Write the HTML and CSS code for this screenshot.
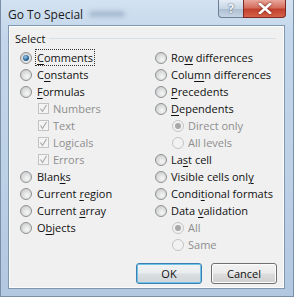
FILE: index.html
```html
<!DOCTYPE html>
<html>
<head>
  <title>Go To Special</title>
  <link rel="stylesheet" href="styles.css">
</head>
<body>

  <div class="window">
    <div class="titlebar">
      <span class="title">Go To Special</span>
      <span class="smudge"></span>
      <div class="caption-buttons">
        <span class="cap help">?</span>
        <span class="cap close">
          <svg width="14" height="11" viewBox="0 0 14 11">
            <path d="M2 1 L12 10 M12 1 L2 10" stroke="#fff" stroke-width="2.6" stroke-linecap="square"/>
          </svg>
        </span>
      </div>
    </div>

    <div class="client">
      <div class="group-head">
        <span>Select</span>
        <span class="rule"></span>
      </div>

      <div class="columns">
        <div class="col">
          <div class="opt"><span class="radio on"></span><span class="focus"><u>C</u>omments</span></div>
          <div class="opt"><span class="radio"></span><span>C<u>o</u>nstants</span></div>
          <div class="opt"><span class="radio"></span><span><u>F</u>ormulas</span></div>
          <div class="opt sub off"><span class="check"><svg width="9" height="9" viewBox="0 0 9 9"><path d="M1.5 4.5 L3.5 7.5 L7.5 1" fill="none" stroke="#a9a9a9" stroke-width="1.2"/></svg></span><span>Numbers</span></div>
          <div class="opt sub off"><span class="check"><svg width="9" height="9" viewBox="0 0 9 9"><path d="M1.5 4.5 L3.5 7.5 L7.5 1" fill="none" stroke="#a9a9a9" stroke-width="1.2"/></svg></span><span>Text</span></div>
          <div class="opt sub off"><span class="check"><svg width="9" height="9" viewBox="0 0 9 9"><path d="M1.5 4.5 L3.5 7.5 L7.5 1" fill="none" stroke="#a9a9a9" stroke-width="1.2"/></svg></span><span>Logicals</span></div>
          <div class="opt sub off"><span class="check"><svg width="9" height="9" viewBox="0 0 9 9"><path d="M1.5 4.5 L3.5 7.5 L7.5 1" fill="none" stroke="#a9a9a9" stroke-width="1.2"/></svg></span><span>Errors</span></div>
          <div class="opt"><span class="radio"></span><span>Blan<u>k</u>s</span></div>
          <div class="opt"><span class="radio"></span><span>Current <u>r</u>egion</span></div>
          <div class="opt"><span class="radio"></span><span>Current <u>a</u>rray</span></div>
          <div class="opt"><span class="radio"></span><span>O<u>b</u>jects</span></div>
        </div>

        <div class="col">
          <div class="opt"><span class="radio"></span><span>Ro<u>w</u> differences</span></div>
          <div class="opt"><span class="radio"></span><span>Colu<u>m</u>n differences</span></div>
          <div class="opt"><span class="radio"></span><span><u>P</u>recedents</span></div>
          <div class="opt"><span class="radio"></span><span><u>D</u>ependents</span></div>
          <div class="opt sub-r off"><span class="radio on"></span><span>Direct only</span></div>
          <div class="opt sub-r off"><span class="radio"></span><span>All levels</span></div>
          <div class="opt"><span class="radio"></span><span>La<u>s</u>t cell</span></div>
          <div class="opt"><span class="radio"></span><span>Visible cells onl<u>y</u></span></div>
          <div class="opt"><span class="radio"></span><span>Condi<u>t</u>ional formats</span></div>
          <div class="opt"><span class="radio"></span><span>Data <u>v</u>alidation</span></div>
          <div class="opt sub-r off"><span class="radio on"></span><span>All</span></div>
          <div class="opt sub-r off"><span class="radio"></span><span>Same</span></div>
        </div>
      </div>

      <div class="actions">
        <button class="btn default">OK</button>
        <button class="btn">Cancel</button>
      </div>
    </div>
  </div>

</body>
</html>
```

FILE: styles.css
```css
body {
  margin: 0;
  background: #9fb6cf;
  font-family: "Open Sans", "Noto Sans", sans-serif;
  font-size: 11px;
  color: #111;
}

.window {
  width: 294px;
  height: 297px;
  box-sizing: border-box;
  padding: 0 8px 7px 7px;
  display: flex;
  flex-direction: column;
  background: linear-gradient(180deg, #d3e2f1 0%, #c3d6eb 12%, #bcd0e6 60%, #b2c8e0 100%);
  border: 1px solid #7b90a8;
  border-top: none;
}

.titlebar {
  height: 25px;
  display: flex;
  align-items: flex-start;
  position: relative;
}

.title {
  margin: 6px 0 0 0;
  font-size: 12px;
  color: #1b1b1b;
}

.smudge {
  width: 36px;
  height: 6px;
  margin: 11px 0 0 6px;
  background: #a7bad0;
  border-radius: 3px;
  filter: blur(2px);
}

.caption-buttons {
  margin-left: auto;
  margin-right: -1px;
  display: flex;
}

.cap {
  height: 18px;
  box-sizing: border-box;
  display: flex;
  align-items: center;
  justify-content: center;
  border: 1px solid #6d7f94;
  border-top: none;
}

.help {
  width: 25px;
  border-radius: 0 0 0 4px;
  border-right: none;
  background: linear-gradient(180deg, #e4ecf5 0%, #c7d5e4 50%, #aebfd2 55%, #c6d5e6 100%);
  color: #f5f8fb;
  font-weight: bold;
  font-size: 12px;
  text-shadow: 0 0 2px #5d6f85, 0 0 1px #5d6f85;
}

.close {
  width: 43px;
  border-radius: 0 0 4px 0;
  border-color: #7e2a22;
  background: linear-gradient(180deg, #e9a79b 0%, #d46f5f 45%, #c2412d 55%, #d6614a 100%);
}

.close svg {
  filter: drop-shadow(0 0 1px #6b1a10);
}

.client {
  flex: 1;
  display: flex;
  flex-direction: column;
  background: #f0f0f0;
  border: 1px solid #8197b0;
  box-shadow: inset 0 0 0 1px #fbfcfd;
  padding: 5px 7px 4px 6px;
}

.group-head {
  height: 14px;
  display: flex;
  align-items: center;
  gap: 4px;
  padding-right: 1px;
}

.rule {
  flex: 1;
  height: 1px;
  background: #d5dfe5;
  margin-top: 1px;
}

.columns {
  display: flex;
  margin-top: 4px;
  padding-left: 5px;
}

.col {
  display: flex;
  flex-direction: column;
}

.col:first-child {
  width: 135px;
}

.opt {
  height: 17px;
  display: flex;
  align-items: center;
  gap: 5px;
  white-space: nowrap;
}

.col:last-child .opt {
  gap: 4px;
}

.opt.sub {
  padding-left: 18px;
  gap: 4px;
}

.opt.sub-r {
  padding-left: 17px;
}

.opt.off {
  color: #8e8e8e;
}

.radio {
  width: 12px;
  height: 12px;
  box-sizing: border-box;
  border-radius: 50%;
  border: 1px solid #8f9192;
  background: radial-gradient(circle at 60% 65%, #f7f7f7 0%, #d9dadb 55%, #c4c5c6 100%);
  display: flex;
  align-items: center;
  justify-content: center;
}

.radio.on::after {
  content: "";
  width: 6px;
  height: 6px;
  border-radius: 50%;
  background: radial-gradient(circle at 40% 35%, #9fd0ef 0%, #2f6fa3 50%, #143a63 100%);
}

.off .radio {
  border-color: #c4c4c4;
  background: #f2f2f2;
}

.off .radio.on::after {
  background: #a8a8a8;
}

.check {
  width: 11px;
  height: 11px;
  box-sizing: border-box;
  border: 1px solid #c2c2c2;
  background: #f4f4f4;
  display: flex;
  align-items: center;
  justify-content: center;
}

.focus {
  outline: 1px dotted #333;
  outline-offset: 0;
  padding: 0 1px;
  margin-left: -1px;
}

u {
  text-decoration-thickness: 1px;
  text-underline-offset: 2px;
}

.actions {
  margin-top: auto;
  display: flex;
  justify-content: flex-end;
  gap: 9px;
}

.btn {
  width: 66px;
  height: 21px;
  box-sizing: border-box;
  font-family: inherit;
  font-size: 11px;
  color: #111;
  border: 1px solid #707070;
  border-radius: 3px;
  background: linear-gradient(180deg, #f2f2f2 0%, #ebebeb 48%, #dddddd 52%, #cfcfcf 100%);
  box-shadow: inset 0 0 0 1px #fcfcfc;
  padding: 0;
}

.btn.default {
  border-color: #3c7fb1;
  box-shadow: inset 0 0 0 1px #6fc3e8;
  background: linear-gradient(180deg, #f1f3f4 0%, #e9ecee 48%, #dbdfe2 52%, #d0d5d8 100%);
}
```
